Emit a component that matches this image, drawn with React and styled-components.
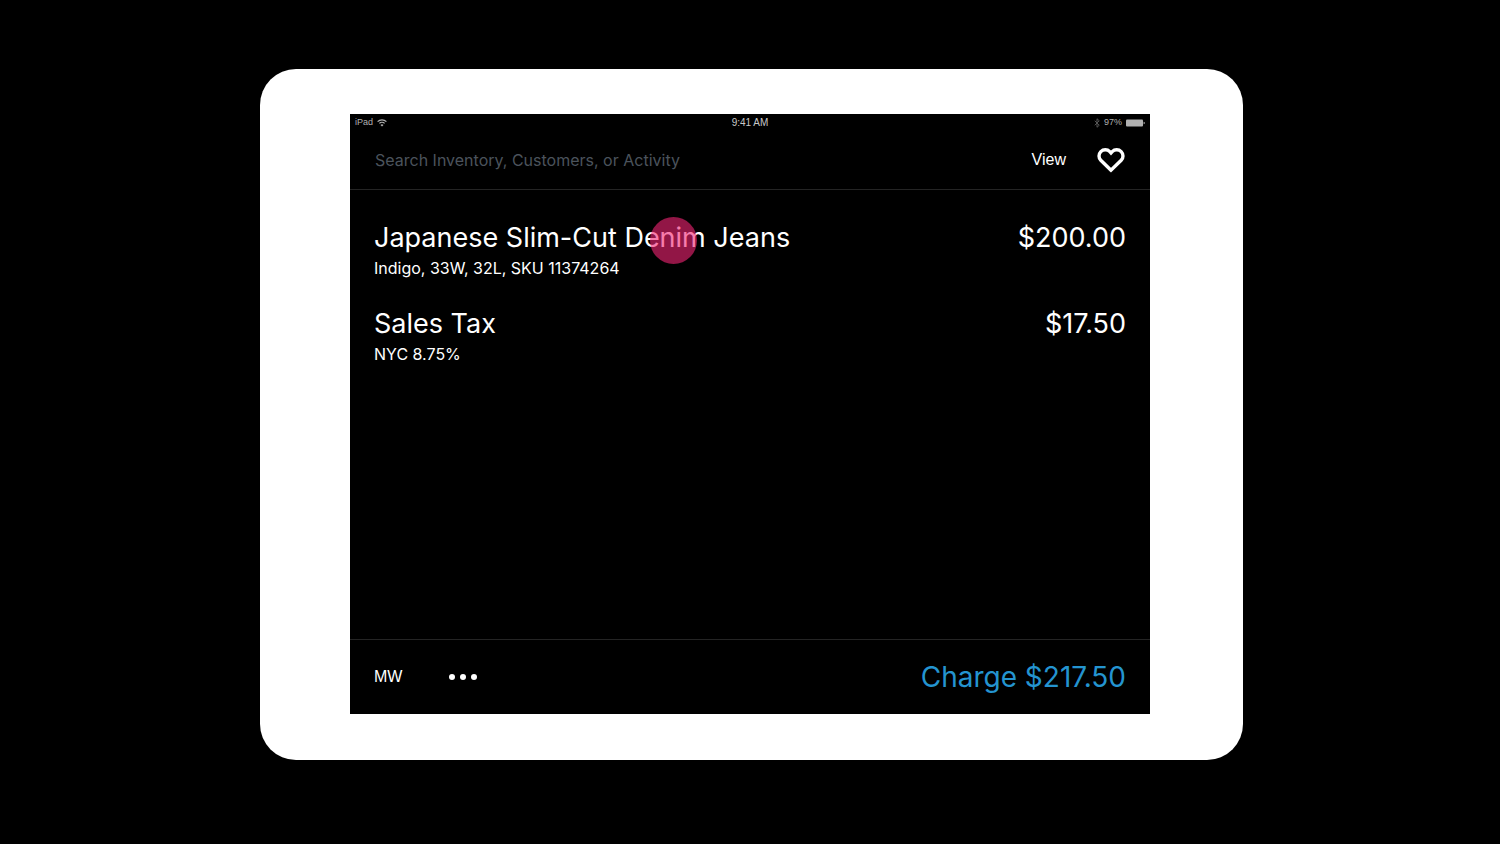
import styled, { createGlobalStyle } from 'styled-components'

const ITEMS = [
  {
    name: 'Japanese Slim-Cut Denim Jeans',
    detail: 'Indigo, 33W, 32L, SKU 11374264',
    price: '$200.00',
    touched: true
  },
  {
    name: 'Sales Tax',
    detail: 'NYC 8.75%',
    price: '$17.50'
  }
]

function WifiIcon() {
  return (
    <svg width="10" height="8" viewBox="0 0 20 16" fill="none" stroke="currentColor" strokeWidth="2.6" aria-hidden="true">
      <path d="M1.2 5.2a12.6 12.6 0 0 1 17.6 0" />
      <path d="M4.8 8.8a7.4 7.4 0 0 1 10.4 0" />
      <path d="M10 14.8l-3-3a4.4 4.4 0 0 1 6 0z" fill="currentColor" stroke="none" />
    </svg>
  )
}

function BluetoothIcon() {
  return (
    <svg width="6" height="10" viewBox="0 0 12 20" fill="none" stroke="currentColor" strokeWidth="1.8" aria-hidden="true">
      <path d="M1.5 5.5l9 9-4.5 4v-17l4.5 4-9 9" />
    </svg>
  )
}

function BatteryIcon() {
  return (
    <svg width="19" height="8" viewBox="0 0 19 8" fill="currentColor" aria-hidden="true">
      <rect x="0" y="0.5" width="17" height="7" rx="1" />
      <path d="M17.6 2.8c1 .2 1.2.7 1.2 1.2s-.2 1-1.2 1.2z" />
    </svg>
  )
}

function HeartIcon() {
  return (
    <svg width="28" height="25" viewBox="0 0 28 25" fill="none" stroke="currentColor" strokeWidth="3.4" aria-hidden="true">
      <path d="M14 22.2L3.8 12.3a6.2 6.2 0 0 1 0-8.7 6.4 6.4 0 0 1 9 0L14 4.9l1.2-1.3a6.4 6.4 0 0 1 9 0 6.2 6.2 0 0 1 0 8.7z" />
    </svg>
  )
}

function MoreIcon() {
  return (
    <svg width="28" height="6" viewBox="0 0 28 6" fill="currentColor" aria-hidden="true">
      <circle cx="3" cy="3" r="3" />
      <circle cx="14" cy="3" r="3" />
      <circle cx="25" cy="3" r="3" />
    </svg>
  )
}

export default function App() {
  return (
    <>
      <GlobalStyle />
      <Page>
        <Tablet>
          <Screen>
            <StatusBar>
              <StatusGroup>
                <span>iPad</span>
                <WifiIcon />
              </StatusGroup>
              <StatusTime>9:41 AM</StatusTime>
              <StatusGroup $end>
                <Dimmed>
                  <BluetoothIcon />
                </Dimmed>
                <span>97%</span>
                <BatteryIcon />
              </StatusGroup>
            </StatusBar>
            <SearchBar>
              <SearchInput
                type="text"
                aria-label="Search"
                placeholder="Search Inventory, Customers, or Activity"
              />
              <TextButton type="button">View</TextButton>
              <IconButton type="button" aria-label="Favorites">
                <HeartIcon />
              </IconButton>
            </SearchBar>
            <ItemList>
              {ITEMS.map((item) => (
                <Item key={item.name}>
                  <ItemRow>
                    <span>{item.name}</span>
                    <span>{item.price}</span>
                  </ItemRow>
                  <ItemDetail>{item.detail}</ItemDetail>
                  {item.touched ? <TouchPoint /> : null}
                </Item>
              ))}
            </ItemList>
            <Footer>
              <TextButton type="button">MW</TextButton>
              <IconButton type="button" aria-label="More">
                <MoreIcon />
              </IconButton>
              <ChargeButton type="button">Charge $217.50</ChargeButton>
            </Footer>
          </Screen>
        </Tablet>
      </Page>
    </>
  )
}

const GlobalStyle = createGlobalStyle`
  * {
    box-sizing: border-box;
  }

  body {
    margin: 0;
    background: #000000;
    color: #ffffff;
    font-family: Inter, 'Liberation Sans', sans-serif;
  }

  button,
  input {
    margin: 0;
    padding: 0;
    border: 0;
    background: none;
    color: inherit;
    font: inherit;
  }

  svg {
    display: block;
  }
`

const Page = styled.main`
  display: flex;
  min-height: 100vh;
  padding: 69px 257px 84px 260px;
`

const Tablet = styled.div`
  display: flex;
  flex: 1;
  min-width: 0;
  padding: 45px 93px 46px 90px;
  border-radius: 36px;
  background: #ffffff;
`

const Screen = styled.section`
  display: flex;
  flex: 1;
  flex-direction: column;
  min-width: 0;
  background: #000000;
`

const StatusBar = styled.div`
  display: grid;
  grid-template-columns: 1fr auto 1fr;
  align-items: center;
  height: 17px;
  padding: 0 5px;
  color: #b0b0b0;
  font-family: 'Liberation Sans', Arial, sans-serif;
  font-size: 9px;
  line-height: 17px;
`

const StatusGroup = styled.div`
  display: flex;
  align-items: center;
  justify-content: ${(props) => (props.$end ? 'flex-end' : 'flex-start')};
  gap: 4px;
`

const StatusTime = styled.time`
  color: #c8c8c8;
  font-size: 10px;
`

const Dimmed = styled.span`
  color: #5c5c5c;
`

const SearchBar = styled.header`
  display: flex;
  align-items: center;
  gap: 31px;
  height: 59px;
  padding: 0 25px;
  border-bottom: 1px solid #242424;
`

const SearchInput = styled.input`
  flex: 1;
  min-width: 0;
  height: 32px;
  font-size: 16px;
  outline: none;

  &::placeholder {
    color: #4b535c;
    opacity: 1;
  }
`

const TextButton = styled.button`
  font-family: 'Liberation Sans', Arial, sans-serif;
  font-size: 16px;
  line-height: 24px;
`

const IconButton = styled.button`
  flex: none;
`

const ItemList = styled.ul`
  display: grid;
  flex: 1;
  align-content: start;
  gap: 24px;
  margin: 0;
  padding: 29px 24px;
  list-style: none;
`

const Item = styled.li`
  position: relative;
`

const ItemRow = styled.div`
  display: flex;
  justify-content: space-between;
  gap: 24px;
  font-size: 27px;
  line-height: 37px;
`

const ItemDetail = styled.div`
  font-size: 16px;
  line-height: 25px;
`

const TouchPoint = styled.span`
  position: absolute;
  top: -2px;
  left: 276px;
  width: 47px;
  height: 47px;
  border-radius: 50%;
  background: rgba(243, 37, 117, 0.6);
`

const Footer = styled.footer`
  display: flex;
  align-items: center;
  gap: 47px;
  height: 75px;
  padding: 0 24px;
  border-top: 1px solid #242424;
`

const ChargeButton = styled.button`
  margin-left: auto;
  color: #2494d0;
  font-size: 28px;
  line-height: 36px;
`
